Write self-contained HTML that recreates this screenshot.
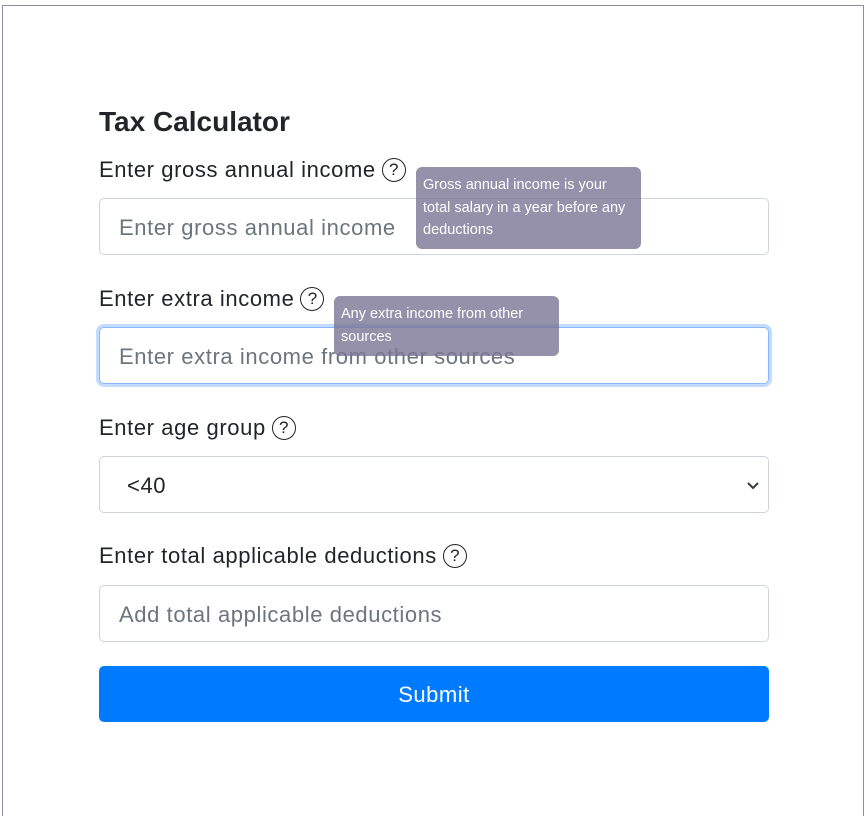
<!DOCTYPE html>
<html style="height:816px;overflow:hidden"><head><meta charset="utf-8"><style>
body{margin:0;width:866px;height:816px;background:#fff;font-family:"Liberation Sans",sans-serif;position:relative;overflow:hidden;color:#212529}
.frame{position:absolute;left:2px;top:5px;width:862px;height:811px;border:1px solid #8f8ba3;border-bottom:none;box-sizing:border-box}
.a{position:absolute}
h1{position:absolute;left:99px;top:106px;margin:0;font-size:28px;font-weight:bold;letter-spacing:0px}
.lbl{position:absolute;left:99px;font-size:22px;letter-spacing:0.6px;white-space:nowrap;display:flex;align-items:center}
.q{display:inline-block;width:24px;height:24px;border:1.5px solid #222;border-radius:50%;box-sizing:border-box;font-size:17px;line-height:21px;text-align:center;margin-left:6px;letter-spacing:0}
.inp{position:absolute;left:99px;width:670px;height:57px;border:1px solid #ced4da;border-radius:5px;box-sizing:border-box;font-size:22px;letter-spacing:0.6px;color:#6c757d;padding-left:19px;line-height:57px;white-space:nowrap}
.tip{position:absolute;background:rgba(122,117,150,0.8);color:#fff;font-size:14.5px;line-height:22.5px;border-radius:6px;padding:7px 7px;box-sizing:border-box}
.btn{position:absolute;left:99px;top:666px;width:670px;height:56px;background:#007bff;border-radius:5px;color:#fff;font-size:22px;letter-spacing:0.5px;text-align:center;line-height:58px}
</style></head><body>
<div class="frame"></div>
<h1>Tax Calculator</h1>
<div class="lbl" style="top:157px">Enter gross annual income<span class="q">?</span></div>
<div class="inp" style="top:198px">Enter gross annual income</div>
<div class="lbl" style="top:286px">Enter extra income<span class="q">?</span></div>
<div class="inp" style="top:327px;border-color:#86b7fe;box-shadow:0 0 0 3px rgba(13,110,253,0.25)">Enter extra income from other sources</div>
<div class="lbl" style="top:415px">Enter age group<span class="q">?</span></div>
<div class="inp" style="top:456px;color:#212529;padding-left:27px">&lt;40
<svg class="a" style="right:8px;top:24px" width="14" height="10" viewBox="0 0 14 10"><path d="M2 2l5 5 5-5" fill="none" stroke="#343a40" stroke-width="2"/></svg></div>
<div class="lbl" style="top:543px">Enter total applicable deductions<span class="q">?</span></div>
<div class="inp" style="top:585px">Add total applicable deductions</div>
<div class="btn">Submit</div>
<div class="tip" style="left:416px;top:167px;width:225px;height:82px">Gross annual income is your total salary in a year before any deductions</div>
<div class="tip" style="left:334px;top:296px;width:225px;height:60px">Any extra income from other sources</div>
</body></html>
